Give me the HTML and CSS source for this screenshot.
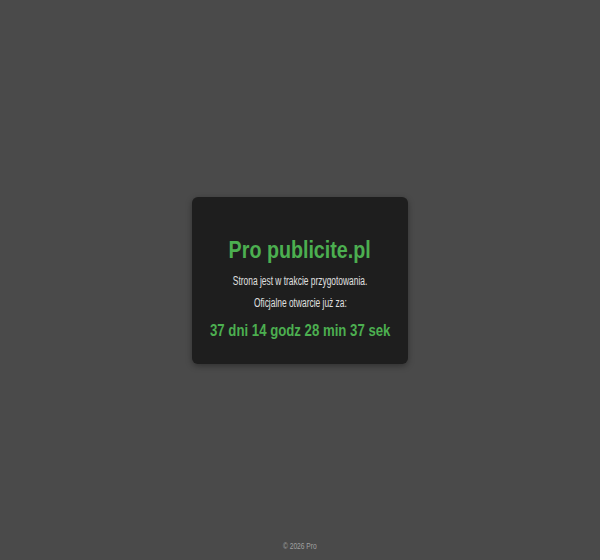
FILE: index.html
```html
<!DOCTYPE html>
<html lang="pl">
<head>
<meta charset="utf-8">
<title>Pro publicite.pl</title>
<link rel="stylesheet" href="styles.css">
</head>
<body>
<main class="page">
  <div class="card">
    <h1 class="line title"><span class="narrow">Pro publicite.pl</span></h1>
    <p class="line text"><span class="narrow">Strona jest w trakcie przygotowania.</span></p>
    <p class="line text text-second"><span class="narrow">Oficjalne otwarcie już za:</span></p>
    <div class="line countdown"><span class="narrow">37 dni 14 godz 28 min 37 sek</span></div>
  </div>
</main>
<footer class="line footer"><span class="narrow">© 2026 Pro</span></footer>
</body>
</html>
```
FILE: styles.css
```css
html, body {
  margin: 0;
  padding: 0;
  height: 100%;
}
body {
  background: #4a4a4a;
  font-family: "Liberation Sans", Arial, sans-serif;
  color: #e0e0e0;
  display: grid;
  grid-template: 100vh / 100%;
}
.page, .footer {
  grid-area: 1 / 1;
}
.page {
  display: flex;
  align-items: center;
  justify-content: center;
}
.line {
  display: flex;
  justify-content: center;
}
.narrow {
  flex: none;
  white-space: nowrap;
  transform-origin: center;
}
.card {
  width: 180px;
  background: #1e1e1e;
  border-radius: 6px;
  box-shadow: 0 2px 6px rgba(0,0,0,0.35);
  padding: 39px 18px 23px;
}
.title {
  margin: 0 0 10px;
  font-size: 24px;
  font-weight: bold;
  color: #4caf50;
  line-height: 28px;
}
.title .narrow { transform: scaleX(0.82); }
.text {
  margin: 0;
  font-size: 12px;
  line-height: 14px;
}
.text .narrow { transform: scaleX(0.70); }
.text-second {
  margin-top: 8px;
}
.countdown {
  margin-top: 11px;
  font-size: 17px;
  font-weight: bold;
  color: #4caf50;
  line-height: 20px;
}
.countdown .narrow { transform: scaleX(0.776); }
.footer {
  align-self: end;
  font-size: 9px;
  color: #a0a0a0;
  padding-bottom: 8px;
  line-height: 12px;
}
.footer .narrow { transform: scaleX(0.74); }
```
